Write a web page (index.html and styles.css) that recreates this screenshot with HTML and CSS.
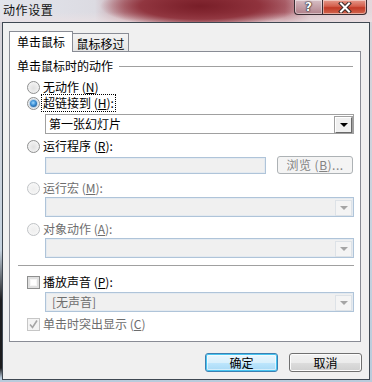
FILE: index.html
```html
<!DOCTYPE html>
<html>
<head>
  <title>动作设置</title>
  <link rel="stylesheet" href="styles.css">
</head>
<body>
  <div class="frame">
    <div class="titlebar">
      <span class="title">动作设置</span>
      <div class="caption-btns">
        <span class="cap-btn help">?</span>
        <span class="cap-btn close">
          <svg width="14" height="11" viewBox="0 0 14 11">
            <path d="M3 1.5 L11 9.5 M11 1.5 L3 9.5" stroke="#3a2a2a" stroke-width="4" stroke-linecap="square"/>
            <path d="M3 1.5 L11 9.5 M11 1.5 L3 9.5" stroke="#fff" stroke-width="2" stroke-linecap="square"/>
          </svg>
        </span>
      </div>
    </div>

    <div class="client">
      <div class="tabs">
        <span class="tab active">单击鼠标</span>
        <span class="tab">鼠标移过</span>
      </div>

      <div class="panel">
        <div class="group-head">
          <span>单击鼠标时的动作</span>
          <i class="rule"></i>
        </div>

        <div class="opt"><span class="radio"></span><span>无动作 (<u>N</u>)</span></div>
        <div class="opt"><span class="radio checked"></span><span class="focus">超链接到 (<u>H</u>):</span></div>
        <div class="combo">
          <span class="combo-text">第一张幻灯片</span>
          <span class="drop"><i class="arrow"></i></span>
        </div>

        <div class="opt opt-run"><span class="radio"></span><span>运行程序 (<u>R</u>):</span></div>
        <div class="field-row">
          <span class="field"></span>
          <span class="browse">浏览 (<u>B</u>)...</span>
        </div>

        <div class="opt opt-macro disabled"><span class="radio"></span><span>运行宏 (<u>M</u>):</span></div>
        <div class="combo off tight">
          <span class="combo-text"></span>
          <span class="drop"><i class="arrow"></i></span>
        </div>

        <div class="opt opt-object disabled"><span class="radio"></span><span>对象动作 (<u>A</u>):</span></div>
        <div class="combo off tight">
          <span class="combo-text"></span>
          <span class="drop"><i class="arrow"></i></span>
        </div>

        <div class="separator"></div>

        <div class="opt opt-sound"><span class="check"></span><span>播放声音 (<u>P</u>):</span></div>
        <div class="combo off sound">
          <span class="combo-text">[无声音]</span>
          <span class="drop"><i class="arrow"></i></span>
        </div>

        <div class="opt opt-highlight disabled">
          <span class="check checked">
            <svg width="11" height="11" viewBox="0 0 11 11">
              <path d="M2 5.5 L4.5 8.5 L9 1.5" fill="none" stroke="#a6a6a6" stroke-width="1.6"/>
            </svg>
          </span>
          <span>单击时突出显示 (<u>C</u>)</span>
        </div>
      </div>

      <div class="actions">
        <button class="btn primary">确定</button>
        <button class="btn">取消</button>
      </div>
    </div>
  </div>
</body>
</html>
```

FILE: styles.css
```css
* {
  margin: 0;
  padding: 0;
  box-sizing: border-box;
}

body {
  width: 372px;
  height: 382px;
  overflow: hidden;
  font-family: "Noto Sans CJK SC", "Liberation Sans", sans-serif;
  font-size: 12px;
  line-height: 16px;
  color: #000;
}

u {
  text-decoration: underline;
  text-underline-offset: 1px;
}

/* Aero glass window frame */
.frame {
  width: 372px;
  height: 382px;
  background:
    linear-gradient(180deg, transparent 250px, #1c1c1e 300px, #1c1c1e 368px, transparent 378px) 0 0 / 2px 100% no-repeat,
    linear-gradient(180deg, #d9d3d8 0%, #c7d3df 60%, #b9cbdc 100%);
}

.titlebar {
  height: 22px;
  display: flex;
  justify-content: space-between;
  align-items: flex-start;
  background:
    radial-gradient(ellipse 100px 22px at 200px 6px, rgba(120, 30, 40, 1) 0%, rgba(140, 45, 55, 0.9) 60%, rgba(170, 90, 100, 0) 100%),
    linear-gradient(180deg, rgba(255, 255, 255, 0) 55%, rgba(235, 225, 228, 0.75) 100%),
    linear-gradient(90deg, #e2e5ec 0%, #dcdbe2 95px, #c59aa2 125px, #a9545f 200px, #b4707a 285px, #d8c0c5 310px, #e4d8dc 372px);
}

.title {
  padding: 2px 0 0 3px;
  font-size: 12px;
  letter-spacing: 0.6px;
  color: #111;
}

.caption-btns {
  display: flex;
  margin-right: 5px;
}

.cap-btn {
  height: 15px;
  display: flex;
  align-items: center;
  justify-content: center;
  border: 1px solid #3b2d33;
  border-top: none;
  box-shadow: inset 0 0 0 1px rgba(255, 255, 255, 0.45);
}

.help {
  width: 28px;
  border-right: none;
  border-radius: 0 0 0 4px;
  background: linear-gradient(180deg, rgba(215, 190, 196, 0.85), rgba(170, 120, 130, 0.85));
  color: #fff;
  font-family: "DejaVu Sans", sans-serif;
  font-weight: bold;
  font-size: 12px;
  text-shadow: 0 0 1px #222, 0 0 1px #222, 0 0 2px #222;
}

.close {
  width: 45px;
  border-radius: 0 0 4px 0;
  background: linear-gradient(180deg, #e59a8c 0%, #d45f4c 45%, #c23a26 55%, #d2654e 100%);
}

/* client area */
.client {
  margin: 0 2px;
  height: 358px;
  border: 1px solid #3f4852;
  background: #f0f0f0;
  padding: 8px 8px 0 6px;
}

.tabs {
  display: flex;
  align-items: flex-end;
  height: 20px;
}

.tab {
  display: flex;
  justify-content: center;
  height: 18px;
  padding-top: 2px;
  border: 1px solid #898c95;
  border-bottom: none;
  background: linear-gradient(180deg, #f3f3f3, #e6e6e6);
  line-height: 16px;
}

.tab:not(.active) {
  width: 57px;
  margin-left: -1px;
}

.tab.active {
  position: relative;
  z-index: 1;
  width: 64px;
  height: 21px;
  margin-bottom: -1px;
  padding-top: 2px;
  background: #fff;
}

.panel {
  height: 291px;
  border: 1px solid #898c95;
  background: #fff;
  padding: 0 6px 0 7px;
}

.group-head {
  display: flex;
  align-items: center;
  height: 16px;
  margin-top: 6px;
}

.rule {
  flex: 1;
  height: 1px;
  margin: 0 1px 0 6px;
  background: #a0a0a0;
}

.opt {
  display: flex;
  align-items: center;
  gap: 3px;
  height: 16px;
  padding-left: 10px;
}

.group-head + .opt { margin-top: 5px; }
.opt-run { margin-top: 4px; }
.opt-macro { margin-top: 6px; }
.opt-object { margin-top: 4px; }
.opt-sound { margin-top: 8px; }
.opt-highlight { margin-top: 4px; }

.disabled { color: #6d6d6d; }

.focus {
  outline: 1px dotted #000;
  outline-offset: 0;
  padding: 0 1px;
  margin-left: -1px;
}

.radio {
  width: 13px;
  height: 13px;
  flex: none;
  border-radius: 50%;
  border: 1px solid #8e8f8f;
  background: radial-gradient(circle at 50% 55%, #e0e0e0 0%, #ececec 45%, #fbfbfb 100%);
  display: flex;
  align-items: center;
  justify-content: center;
}

.radio.checked::after {
  content: '';
  width: 7px;
  height: 7px;
  border-radius: 50%;
  background: radial-gradient(circle at 45% 40%, #9fd8ff 0%, #3a8ed4 45%, #0f3f7a 100%);
  box-shadow: 0 0 1px 1px rgba(80, 150, 210, 0.35);
}

.disabled .radio {
  border-color: #c0c3c6;
  background: radial-gradient(circle at 50% 55%, #eeeeee 0%, #f4f4f4 50%, #fcfcfc 100%);
}

.check {
  width: 13px;
  height: 13px;
  flex: none;
  border: 1px solid #8e8f8f;
  background: #fff;
  box-shadow: inset 0 0 0 2px #e0e0e0, inset 0 0 0 3px #f6f6f6;
  display: flex;
  align-items: center;
  justify-content: center;
}

.check.checked {
  border-color: #c6c6c6;
  box-shadow: inset 0 0 0 1px #f4f4f4;
  background: #f4f4f4;
}

/* combos and fields */
.combo {
  display: flex;
  align-items: center;
  justify-content: space-between;
  height: 20px;
  margin: 3px 0 0 28px;
  border: 1px solid #a0a0a0;
  background: #fff;
  padding: 0 1px 0 3px;
}

.combo.tight { margin-top: 1px; }
.combo.sound { margin-top: 2px; }

.combo-text {
  line-height: 16px;
}

.drop {
  width: 17px;
  height: 16px;
  display: flex;
  align-items: center;
  justify-content: center;
  background: #f0f0f0;
  border: 1px solid;
  border-color: #fff #696969 #696969 #fff;
  box-shadow: 0 0 0 1px #a0a0a0;
  margin-top: 1px;
}

.arrow {
  width: 0;
  height: 0;
  border-left: 4px solid transparent;
  border-right: 4px solid transparent;
  border-top: 4px solid #000;
  margin-top: 1px;
}

.combo.off {
  border-color: #afc4d9;
  background: #f0f0f0;
  color: #6d6d6d;
  box-shadow: inset 0 0 0 1px #e4eaf0;
  padding-left: 6px;
}

.combo.off .drop {
  border: 1px solid #dde2e7;
  box-shadow: none;
  background: #f4f4f4;
}

.combo.off .arrow {
  border-top-color: #a5a5a5;
}

.field-row {
  display: flex;
  align-items: center;
  gap: 11px;
  height: 18px;
  margin: 2px 0 0 28px;
}

.field {
  width: 221px;
  height: 17px;
  border: 1px solid #afc4d9;
  background: #f0f0f0;
  box-shadow: inset 0 0 0 1px #e4eaf0;
}

.browse {
  width: 76px;
  height: 18px;
  display: flex;
  align-items: center;
  justify-content: center;
  border: 1px solid #adb2b5;
  border-radius: 3px;
  background: #f4f4f4;
  color: #838383;
  letter-spacing: 0.5px;
}

.separator {
  height: 1px;
  margin: 7px 0 0 1px;
  background: #a0a0a0;
}

/* dialog buttons */
.actions {
  display: flex;
  justify-content: flex-end;
  gap: 11px;
  margin: 11px -1px 0 0;
}

.btn {
  width: 73px;
  height: 19px;
  font: inherit;
  line-height: 15px;
  border: 1px solid #707070;
  border-radius: 3px;
  background: linear-gradient(180deg, #f2f2f2 0%, #ebebeb 50%, #dddddd 51%, #cfcfcf 100%);
  box-shadow: inset 0 0 0 1px #fcfcfc;
  color: #000;
}

.btn.primary {
  border-color: #3c7fb1;
  background: linear-gradient(180deg, #eaf6fd 0%, #d9f0fc 50%, #bee6fd 51%, #a7d9f5 100%);
  box-shadow: inset 0 0 0 1px #48c5f1, inset 0 0 0 2px rgba(255, 255, 255, 0.5);
}
```
